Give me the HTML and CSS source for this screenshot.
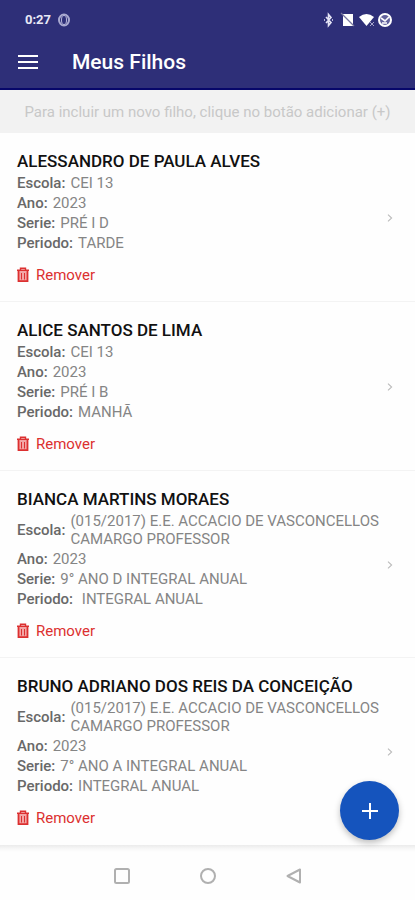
FILE: index.html
```html
<!DOCTYPE html>
<html lang="pt-BR">
<head>
<meta charset="utf-8">
<meta name="viewport" content="width=device-width, initial-scale=1">
<title>Meus Filhos</title>
<link rel="stylesheet" href="styles.css">
</head>
<body>
<svg class="sprite" aria-hidden="true">
  <symbol id="trash" viewBox="0 0 12 16">
    <path d="M3.500 3V1.200h5V3M0 3.200h12" fill="none" stroke="currentColor" stroke-width="1.400"/>
    <path d="M1.500 4v10.200h9V4" fill="#f3a5a5" stroke="currentColor" stroke-width="1.800"/>
    <path d="M4.500 6v6.500M7.500 6v6.500" stroke="currentColor" stroke-width="1"/>
  </symbol>
  <symbol id="chevron" viewBox="0 0 6 8">
    <path d="M1 .7 4.600 4 1 7.300" fill="none" stroke="currentColor" stroke-width="1.100"/>
  </symbol>
</svg>
<div class="app">
  <header class="header">
    <div class="status">
      <span class="clock">0:27</span>
      <svg class="ring" viewBox="0 0 14 14" aria-hidden="true"><ellipse cx="7" cy="7" rx="5" ry="5.500" fill="none" stroke="#a9a9d0" stroke-width="2"/><ellipse cx="7" cy="7" rx="2.500" ry="4.500" fill="#2e2f78" stroke="#b9b9dc" stroke-width="1"/></svg>
      <svg class="signals" viewBox="0 0 70 16" aria-hidden="true">
        <path d="m3 5 5 5.500-2.500 3v-11L8 5.500 3 11" fill="none" stroke="#e4e4f5" stroke-width="1.600"/>
        <path d="M1 8h1M9 8h1" stroke="#e4e4f5" stroke-width="1.500"/>
        <path d="M20 2h10v12H20z" fill="#fff"/><path d="m18 1 13 13" stroke="#77779f" stroke-width="1.300"/>
        <path d="M36 5q7.500-6 15 0l-7.500 9z" fill="#fff"/><path d="m47 10 4 4m0-4-4 4" stroke="#a5a5cb" stroke-width="1"/>
        <circle cx="62" cy="8" r="6" fill="#62629d" stroke="#fff" stroke-width="2"/>
        <path d="m58 6 4 3 4-4M59 11h5" fill="none" stroke="#fff" stroke-width="1.600"/>
      </svg>
    </div>
    <div class="toolbar">
      <button class="menu" aria-label="Menu"><svg viewBox="0 0 20 14"><path d="M0 1h20M0 7h20M0 13h20" stroke="currentColor" stroke-width="2"/></svg></button>
      <h1>Meus Filhos</h1>
    </div>
  </header>
  <p class="notice">Para incluir um novo filho, clique no botão adicionar (+)</p>
  <main class="list">
    <article class="card">
      <div class="info">
        <h2>ALESSANDRO DE PAULA ALVES</h2>
        <dl>
          <div><dt>Escola:</dt><dd>CEI 13</dd></div>
          <div><dt>Ano:</dt><dd>2023</dd></div>
          <div><dt>Serie:</dt><dd>PRÉ I D</dd></div>
          <div><dt>Periodo:</dt><dd>TARDE</dd></div>
        </dl>
        <button class="remove"><svg aria-hidden="true"><use href="#trash"/></svg>Remover</button>
      </div>
      <a class="open" href="#" aria-label="Abrir"><svg><use href="#chevron"/></svg></a>
    </article>
    <article class="card">
      <div class="info">
        <h2>ALICE SANTOS DE LIMA</h2>
        <dl>
          <div><dt>Escola:</dt><dd>CEI 13</dd></div>
          <div><dt>Ano:</dt><dd>2023</dd></div>
          <div><dt>Serie:</dt><dd>PRÉ I B</dd></div>
          <div><dt>Periodo:</dt><dd>MANHÃ</dd></div>
        </dl>
        <button class="remove"><svg aria-hidden="true"><use href="#trash"/></svg>Remover</button>
      </div>
      <a class="open" href="#" aria-label="Abrir"><svg><use href="#chevron"/></svg></a>
    </article>
    <article class="card">
      <div class="info">
        <h2>BIANCA MARTINS MORAES</h2>
        <dl>
          <div><dt>Escola:</dt><dd>(015/2017) E.E. ACCACIO DE VASCONCELLOS CAMARGO PROFESSOR</dd></div>
          <div><dt>Ano:</dt><dd>2023</dd></div>
          <div><dt>Serie:</dt><dd>9° ANO D INTEGRAL ANUAL</dd></div>
          <div><dt>Periodo:</dt><dd>&nbsp;INTEGRAL ANUAL</dd></div>
        </dl>
        <button class="remove"><svg aria-hidden="true"><use href="#trash"/></svg>Remover</button>
      </div>
      <a class="open" href="#" aria-label="Abrir"><svg><use href="#chevron"/></svg></a>
    </article>
    <article class="card">
      <div class="info">
        <h2>BRUNO ADRIANO DOS REIS DA CONCEIÇÃO</h2>
        <dl>
          <div><dt>Escola:</dt><dd>(015/2017) E.E. ACCACIO DE VASCONCELLOS CAMARGO PROFESSOR</dd></div>
          <div><dt>Ano:</dt><dd>2023</dd></div>
          <div><dt>Serie:</dt><dd>7° ANO A INTEGRAL ANUAL</dd></div>
          <div><dt>Periodo:</dt><dd>INTEGRAL ANUAL</dd></div>
        </dl>
        <button class="remove"><svg aria-hidden="true"><use href="#trash"/></svg>Remover</button>
      </div>
      <a class="open" href="#" aria-label="Abrir"><svg><use href="#chevron"/></svg></a>
    </article>
  </main>
  <nav class="system">
    <button aria-label="Recentes"><svg viewBox="0 0 16 16"><rect x="1" y="1" width="14" height="14" rx="1.500"/></svg></button>
    <button aria-label="Início"><svg viewBox="0 0 16 16"><circle cx="8" cy="8" r="7"/></svg></button>
    <button aria-label="Voltar"><svg viewBox="0 0 16 16"><path d="M14 1.500v13L1.500 8z" stroke-linejoin="round"/></svg></button>
  </nav>
  <button class="fab" aria-label="Adicionar"><svg viewBox="0 0 18 18"><path d="M9 1v16M1 9h16" stroke="currentColor" stroke-width="2"/></svg></button>
</div>
</body>
</html>
```

FILE: styles.css
```css
* { box-sizing: border-box; }
body, h1, h2, p, dl, dd { margin: 0; }
body { background: #fefefe; font-family: Roboto, "Liberation Sans", sans-serif; color: #777; }
button { padding: 0; border: 0; background: none; font: inherit; color: inherit; cursor: pointer; }
svg { display: block; }
.sprite { position: absolute; width: 0; height: 0; }
.app { display: flex; flex-direction: column; min-height: 100vh; }

.header { background: #2e2f78; border-bottom: 2px solid #07076a; color: #fff; }
.status { display: flex; align-items: center; gap: 6px; height: 39px; padding: 0 22px 0 25px; }
.clock { font-size: 13px; line-height: 16px; font-weight: 700; color: #e8e8f6; }
.ring { width: 14px; height: 14px; }
.signals { width: 70px; height: 16px; margin-left: auto; }
.toolbar { display: flex; align-items: center; gap: 34px; height: 49px; padding: 0 18px 4px; }
.menu svg { width: 20px; height: 14px; }
h1 { font-size: 21px; line-height: 24px; font-weight: 500; }

.notice { padding: 13px 16px 12px; background: #f2f2f2; color: #c8c8c8; font-size: 15px; line-height: 18px; text-align: center; }

.card { display: flex; align-items: center; gap: 4px; padding: 17px 22px 16px 17px; border-bottom: 1px solid #f3f3f3; }
.card:last-child { border-bottom-color: #fefefe; }
.info { flex: 1; min-width: 0; }
h2 { color: #111; font-size: 17px; line-height: 23px; font-weight: 500; }
dl > div { display: flex; align-items: center; gap: 5px; padding: 1px 0; font-size: 15px; line-height: 18px; }
dt { flex: none; font-weight: 500; color: #686868; }
dd { color: #858585; }
.remove { display: flex; align-items: center; gap: 7px; margin-top: 12px; color: #dc3030; font-size: 15px; line-height: 20px; }
.remove svg { width: 12px; height: 16px; }
.open { color: #bbb; }
.open svg { width: 6px; height: 8px; }

.system { display: flex; align-items: center; justify-content: center; gap: 70px; flex: 1; min-height: 55px; padding-top: 7px; background: linear-gradient(#ebebeb, #f8f8f8 4px, #fefefe 7px); }
.system svg { width: 16px; height: 16px; fill: none; stroke: #b0b0b0; stroke-width: 2; }

.fab { position: fixed; right: 16px; bottom: 60px; display: grid; place-items: center; width: 59px; height: 59px; border-radius: 50%; background: #1554bd; color: #fff; box-shadow: 0 3px 6px rgb(0 0 0 / 25%); }
.fab svg { width: 18px; height: 18px; }
```
